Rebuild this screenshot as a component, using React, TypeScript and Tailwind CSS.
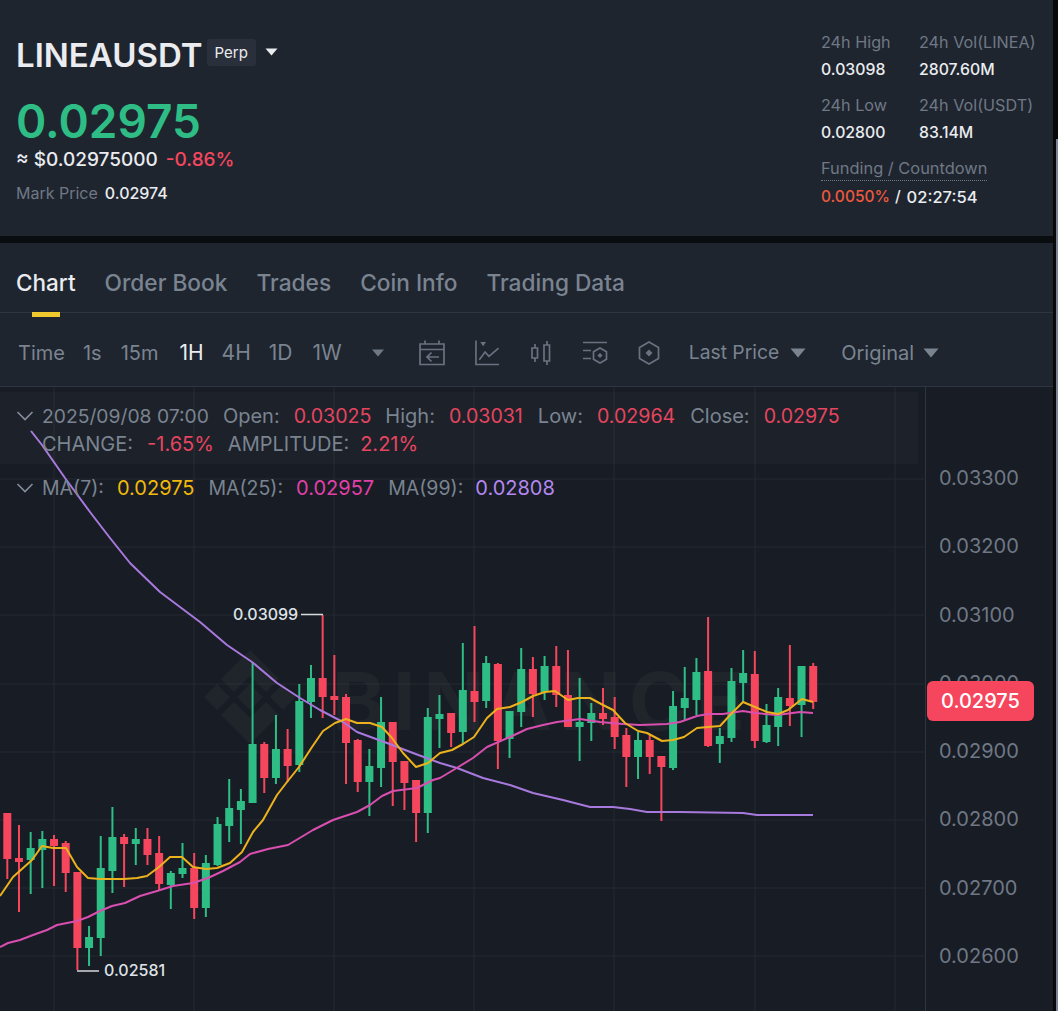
import React from "react";

const UP = "#2ebd85";
const DOWN = "#f6465d";

// wickTop, bodyTop, bodyBottom, wickBottom, up (1) or down (0)
const candles: [number, number, number, number, number][] = [
  [813, 813, 859, 879, 0],
  [825, 858, 862, 912, 0],
  [832, 848, 860, 894, 1],
  [831, 839, 850, 888, 1],
  [835, 839, 846, 886, 0],
  [841, 843, 873, 892, 0],
  [872, 872, 948, 970, 0],
  [926, 937, 948, 966, 1],
  [836, 868, 938, 956, 1],
  [807, 837, 871, 893, 1],
  [834, 837, 844, 887, 0],
  [828, 839, 844, 865, 1],
  [828, 839, 855, 865, 0],
  [836, 853, 884, 890, 0],
  [871, 873, 885, 909, 1],
  [843, 868, 874, 878, 1],
  [853, 868, 908, 919, 0],
  [855, 863, 908, 917, 1],
  [817, 824, 865, 866, 1],
  [779, 808, 826, 842, 1],
  [789, 801, 810, 844, 1],
  [662, 744, 803, 803, 1],
  [742, 744, 778, 793, 0],
  [715, 749, 778, 784, 1],
  [729, 749, 766, 782, 0],
  [684, 701, 765, 772, 1],
  [665, 678, 702, 718, 1],
  [615, 678, 697, 718, 0],
  [655, 696, 700, 715, 0],
  [694, 697, 743, 784, 0],
  [739, 740, 782, 792, 0],
  [749, 766, 782, 816, 1],
  [697, 722, 768, 787, 1],
  [722, 722, 762, 806, 0],
  [761, 761, 783, 810, 0],
  [780, 780, 813, 842, 0],
  [708, 717, 813, 833, 1],
  [695, 714, 719, 748, 1],
  [713, 713, 733, 747, 0],
  [643, 690, 732, 743, 1],
  [626, 691, 702, 722, 0],
  [656, 663, 701, 708, 1],
  [663, 664, 741, 769, 0],
  [711, 711, 739, 758, 1],
  [648, 669, 712, 727, 1],
  [657, 669, 694, 717, 0],
  [656, 666, 692, 700, 1],
  [646, 666, 695, 707, 0],
  [650, 695, 727, 727, 0],
  [678, 722, 727, 761, 1],
  [703, 713, 723, 741, 1],
  [688, 713, 719, 725, 0],
  [697, 717, 737, 749, 0],
  [728, 735, 757, 787, 0],
  [732, 740, 757, 779, 1],
  [735, 740, 757, 774, 0],
  [756, 756, 767, 821, 0],
  [691, 706, 768, 770, 1],
  [667, 698, 708, 720, 1],
  [658, 672, 700, 715, 1],
  [617, 671, 746, 747, 0],
  [728, 736, 744, 763, 1],
  [668, 681, 738, 742, 1],
  [650, 673, 683, 702, 1],
  [651, 674, 741, 748, 0],
  [704, 725, 742, 743, 1],
  [688, 697, 727, 746, 1],
  [645, 698, 706, 726, 0],
  [666, 666, 705, 737, 1],
  [663, 666, 702, 709, 0],
];

const ma7 =
  "0,896 13,877 32,860 42,846 53,848 66,848 77,867 88,878 100,879 124,879 137,878 147,876 159,867 170,857 182,857 193,867 206,869 217,868 230,863 242,852 253,832 263,820 277,795 287,782 299,767 312,747 323,731 335,723 346,719 357,723 370,723 382,727 392,738 403,753 416,767 428,763 440,753 452,750 463,744 474,737 487,718 497,709 510,707 522,702 533,696 545,692 555,691 568,700 578,698 590,698 603,705 613,710 625,723 638,731 647,733 662,741 673,740 684,737 697,728 708,727 720,726 732,713 743,702 755,707 767,712 778,714 788,710 802,699 813,702";
const ma25 =
  "0,947 8,943 20,940 33,935 47,930 57,925 77,921 88,917 100,911 112,906 125,903 140,896 157,891 173,886 193,883 208,878 223,871 240,862 250,854 268,849 288,845 313,830 333,820 357,812 370,805 382,796 393,791 417,788 433,780 440,778 455,769 473,758 487,747 510,737 527,729 543,725 557,722 580,719 600,722 623,724 640,725 667,724 680,722 697,716 708,714 723,714 743,711 755,713 777,715 800,712 813,713";
const ma99 =
  "31,431 42,445 65,478 90,512 110,538 130,563 160,592 200,622 227,645 252,662 277,683 300,698 320,710 343,722 357,732 387,743 413,753 440,763 457,768 483,778 510,785 533,793 563,800 590,807 613,807 630,809 647,812 680,812 743,813 757,815 813,815";

const gridY = [479, 547, 615, 684, 752, 820, 888, 956];
const gridX = [54, 194, 334, 474, 614, 755, 895];
const axisLabels = ["0.03300", "0.03200", "0.03100", "0.03000", "0.02900", "0.02800", "0.02700", "0.02600"];

function Caret({ className }: { className: string }) {
  return (
    <svg viewBox="0 0 16 10" className={className} fill="currentColor">
      <path d="M0.5 0.5h15L8 9.5z" />
    </svg>
  );
}

function Chevron() {
  return (
    <svg viewBox="0 0 18 10" className="h-[10px] w-[18px] shrink-0 text-[#848e9c]" fill="none" stroke="currentColor" strokeWidth="1.6">
      <path d="M1.5 1l7.5 7.5L16.5 1" />
    </svg>
  );
}

function CalendarIcon() {
  return (
    <svg viewBox="0 0 26 26" className="h-[26px] w-[26px]" fill="none" stroke="currentColor" strokeWidth="1.7">
      <path d="M1 4h24v20.500H1zM1 9.500h24M6 .5v3.500M20 .5v3.500" />
      <path d="M20 17H8M12.500 12.500L8 17l4.500 4.500" />
    </svg>
  );
}

function LineIcon() {
  return (
    <svg viewBox="0 0 26 26" className="h-[26px] w-[25px]" fill="none" stroke="currentColor" strokeWidth="1.7">
      <path d="M1 0v25h24" />
      <path d="M4.500 20l6-8 4 4.500L24.500 8" />
      <path d="M5.500 1.500h6L8.500 6z" fill="currentColor" stroke="none" />
    </svg>
  );
}

function CandleIcon() {
  return (
    <svg viewBox="0 0 22 24" className="h-[24px] w-[22px]" fill="none" stroke="currentColor" strokeWidth="1.7">
      <path d="M2 7h5.500v10H2zM5 3v4M5 17v4M14 4h5.500v16H14zM17 0v4M17 20v4" />
    </svg>
  );
}

function ListHexIcon() {
  return (
    <svg viewBox="0 0 26 24" className="h-[24px] w-[26px]" fill="none" stroke="currentColor" strokeWidth="1.7">
      <path d="M1 1.500h24M1 9.500h8M1 17.500h8" />
      <path d="M18 7l6.500 3.800v7.400L18 22l-6.500-3.800v-7.400z" />
      <path d="M18 12l2.500 2.500-2.500 2.500-2.500-2.500z" fill="currentColor" stroke="none" />
    </svg>
  );
}

function HexIcon() {
  return (
    <svg viewBox="0 0 22 24" className="h-[24px] w-[22px]" fill="none" stroke="currentColor" strokeWidth="1.7">
      <path d="M11 1l9.500 5.500v11L11 23l-9.500-5.500v-11z" />
      <path d="M11 8.500l3.500 3.500-3.500 3.500L7.500 12z" fill="currentColor" stroke="none" />
    </svg>
  );
}

function Stat({ label, value }: { label: string; value: string }) {
  return (
    <div className="flex flex-col">
      <span className="text-[16.200px] leading-[20px] whitespace-nowrap text-[#6f7885]">{label}</span>
      <span className="mt-[8px] text-[15.800px] leading-[20px] font-medium text-[#eaecef]">{value}</span>
    </div>
  );
}

function ChartDrawing() {
  return (
    <svg viewBox="0 387 926 624" className="absolute inset-0 h-[624px] w-[926px]">
      {gridY.map((y) => (
        <line key={y} x1="0" x2="926" y1={y} y2={y} stroke="#252a33" strokeWidth="1" />
      ))}
      {gridX.map((x) => (
        <line key={x} x1={x} x2={x} y1="387" y2="1011" stroke="#252a33" strokeWidth="1" />
      ))}
      {/* watermark */}
      <g fill="#ffffff" fillOpacity="0.035">
        <path
          transform="translate(250 697)"
          d="M0 -47L-29 -18L-16 -5L0 -21L16 -5L29 -18ZM-33 -13L-46 0L-33 13L-20 0ZM33 -13L20 0L33 13L46 0ZM0 -13L-13 0L0 13L13 0ZM0 47L-29 18L-16 5L0 21L16 5L29 18Z"
        />
        <text x="332" y="730" fontFamily="Inter, sans-serif" fontWeight="700" fontSize="80" letterSpacing="8">
          BINANCE
        </text>
      </g>
      {candles.map(([wt, bt, bb, wb, up], i) => {
        const x = 7.3 + 11.68 * i;
        const fill = up ? UP : DOWN;
        return (
          <g key={i} fill={fill}>
            <rect x={x - 1} y={wt} width="2" height={wb - wt} />
            <rect x={x - 4} y={bt} width="8" height={bb - bt} />
          </g>
        );
      })}
      <polyline points={ma99} fill="none" stroke="#a779dd" strokeWidth="2" strokeLinejoin="round" />
      <polyline points={ma25} fill="none" stroke="#d84fb0" strokeWidth="2" strokeLinejoin="round" />
      <polyline points={ma7} fill="none" stroke="#ecb21e" strokeWidth="2" strokeLinejoin="round" />
      <path d="M301 614.500h22" stroke="#d5d8dd" strokeWidth="1.5" />
      <path d="M77 971h22" stroke="#d5d8dd" strokeWidth="1.5" />
      <text x="233" y="620" fill="#dfe2e6" fontSize="16" fontWeight="500" fontFamily="Inter, sans-serif">
        0.03099
      </text>
      <text x="104" y="976" fill="#dfe2e6" fontSize="16" fontWeight="500" fontFamily="Inter, sans-serif">
        0.02581
      </text>
    </svg>
  );
}

export default function App() {
  return (
    <div className="flex h-[1011px] w-[1058px] overflow-hidden bg-[#181c24] [font-family:Inter,sans-serif]">
      <div className="flex w-[1053px] flex-col">
        {/* Ticker header */}
        <div className="flex h-[236px] justify-between bg-[#1f252f] pl-[16px] pr-[21px]">
          <div className="flex flex-col pt-[37px]">
            <div className="flex items-center">
              <span className="text-[33px] leading-[36px] font-semibold text-[#eaecef]">LINEAUSDT</span>
              <span className="ml-[4px] -mt-[6px] rounded-[3px] bg-[#2a303b] px-[8px] text-[15px] leading-[27px] text-[#eaecef]">Perp</span>
              <Caret className="ml-[9px] -mt-[7px] h-[8px] w-[13px] text-[#eaecef]" />
            </div>
            <span className="mt-[21px] text-[46px] leading-[54px] font-semibold text-[#2ebd85]">0.02975</span>
            <div className="flex items-center text-[19px] leading-[24px] font-medium">
              <span className="text-[#eaecef]">≈ $0.02975000</span>
              <span className="ml-[8px] text-[#f6465d]">-0.86%</span>
            </div>
            <div className="mt-[11px] flex items-center text-[16px] leading-[20px]">
              <span className="text-[#6f7885]">Mark Price</span>
              <span className="ml-[7px] font-medium text-[#eaecef]">0.02974</span>
            </div>
          </div>
          <div className="flex w-[211px] flex-col pt-[32px]">
            <div className="grid grid-cols-[98px_1fr] gap-y-[15px]">
              <Stat label="24h High" value="0.03098" />
              <Stat label="24h Vol(LINEA)" value="2807.60M" />
              <Stat label="24h Low" value="0.02800" />
              <Stat label="24h Vol(USDT)" value="83.14M" />
            </div>
            <span className="mt-[15px] w-fit border-b border-dotted border-[#6f7885] pb-[2px] text-[16.400px] leading-[20px] text-[#6f7885]">Funding / Countdown</span>
            <div className="mt-[6px] flex text-[15.500px] leading-[20px] font-medium">
              <span className="text-[#f0593c]">0.0050%</span>
              <span className="ml-[5px] text-[#eaecef]">/</span>
              <span className="ml-[6px] text-[16.500px] text-[#eaecef]">02:27:54</span>
            </div>
          </div>
        </div>
        <div className="h-[7px] shrink-0 bg-[#0a0d10]" />

        {/* Tabs */}
        <div className="flex h-[70px] shrink-0 gap-[29px] border-b border-[#2e3440] bg-[#1f252f] pl-[16px] pt-[25px] text-[22.700px] leading-[30px] font-medium text-[#7a8491]">
          <div className="relative h-[45px] text-[22.500px] text-[#eaecef]">
            Chart
            <span className="absolute top-[44px] left-[16px] h-[5px] w-[28px] bg-[#f0c92f]" />
          </div>
          <span>Order Book</span>
          <span>Trades</span>
          <span>Coin Info</span>
          <span>Trading Data</span>
        </div>

        {/* Interval toolbar */}
        <div className="flex h-[74px] shrink-0 items-center border-b border-[#2e3440] bg-[#1f252f] pl-[18px] pt-[6px] text-[20px] text-[#7a8491]">
          <span>Time</span>
          <span className="ml-[18px]">1s</span>
          <span className="ml-[19px]">15m</span>
          <span className="ml-[21px] text-[21px] text-[#eaecef]">1H</span>
          <span className="ml-[18px] text-[21px]">4H</span>
          <span className="ml-[18px] text-[21px]">1D</span>
          <span className="ml-[20px] text-[21px]">1W</span>
          <Caret className="ml-[29px] h-[8px] w-[14px] text-[#6f7885]" />
          <div className="ml-[34px] flex items-center gap-[30px] text-[#6a7280]">
            <CalendarIcon />
            <LineIcon />
            <CandleIcon />
            <ListHexIcon />
            <HexIcon />
          </div>
          <span className="ml-[29px] text-[19.300px]">Last Price</span>
          <Caret className="ml-[11px] h-[10px] w-[16px] text-[#7a8491]" />
          <span className="ml-[35px]">Original</span>
          <Caret className="ml-[9px] h-[10px] w-[16px] text-[#7a8491]" />
        </div>

        {/* Chart and price axis */}
        <div className="flex min-h-0 flex-1">
          <div className="relative h-[624px] w-[926px] shrink-0 border-r border-[#2e3440]">
            <ChartDrawing />
            <div className="absolute top-[5px] left-0 h-[72px] w-[918px] bg-[#ffffff]/[0.025]" />
            <div className="absolute top-[15px] left-[16px] text-[20px] leading-[28px] text-[#7a8491]">
              <div className="flex items-center">
                <Chevron />
                <span className="ml-[8px] text-[19.300px]">2025/09/08 07:00</span>
                <span className="ml-[14px]">Open:</span>
                <span className="ml-[14px] text-[19.600px] text-[#e64560]">0.03025</span>
                <span className="ml-[14px]">High:</span>
                <span className="ml-[14px] text-[19.600px] text-[#e64560]">0.03031</span>
                <span className="ml-[15px]">Low:</span>
                <span className="ml-[14px] text-[19.600px] text-[#e64560]">0.02964</span>
                <span className="ml-[15px]">Close:</span>
                <span className="ml-[14px] text-[19.600px] text-[#e64560]">0.02975</span>
              </div>
              <div className="flex items-center pl-[26px]">
                <span>CHANGE:</span>
                <span className="ml-[14px] text-[#e64560]">-1.65%</span>
                <span className="ml-[14px]">AMPLITUDE:</span>
                <span className="ml-[11px] text-[#e64560]">2.21%</span>
              </div>
              <div className="mt-[16px] flex items-center">
                <Chevron />
                <span className="ml-[8px] text-[19.500px]">MA(7):</span>
                <span className="ml-[13px] text-[#f0b90b]">0.02975</span>
                <span className="ml-[14px] text-[19.500px]">MA(25):</span>
                <span className="ml-[13px] text-[#e040a8]">0.02957</span>
                <span className="ml-[14px] text-[19.500px]">MA(99):</span>
                <span className="ml-[12px] text-[#b388f0]">0.02808</span>
              </div>
            </div>
          </div>
          <div className="relative flex-1">
            <div className="flex flex-col gap-[40.300px] pt-[77px] pl-[13px] text-[20px] leading-[28px] text-[#6f7885]">
              {axisLabels.map((label) => (
                <span key={label}>{label}</span>
              ))}
            </div>
            <div className="absolute top-[294px] left-[1px] flex h-[40px] w-[107px] items-center justify-center rounded-[6px] bg-[#f6465d] text-[20px] font-medium text-white">
              0.02975
            </div>
          </div>
        </div>
      </div>

      {/* Page scrollbar */}
      <div className="flex w-[5px] shrink-0 bg-[#08090b] pl-[3px] pt-[139px]">
        <div className="h-full w-full bg-[#7b8494]" />
      </div>
    </div>
  );
}
